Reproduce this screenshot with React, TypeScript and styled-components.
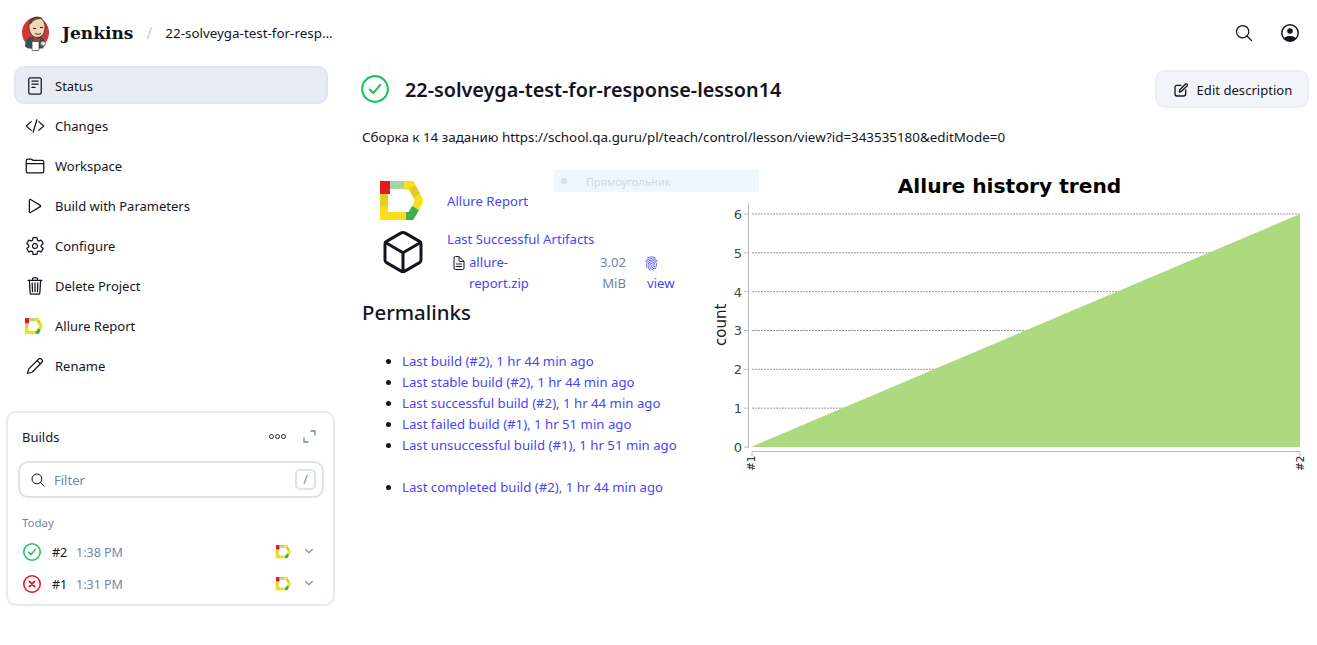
import React from 'react';
import styled, { createGlobalStyle } from 'styled-components';
import {
  IoReaderOutline,
  IoCodeSlashOutline,
  IoFolderOutline,
  IoPlayOutline,
  IoSettingsOutline,
  IoTrashOutline,
  IoSearchOutline,
  IoCubeOutline,
  IoDocumentTextOutline,
  IoFingerPrintOutline,
  IoChevronDown,
} from 'react-icons/io5';

const GlobalStyle = createGlobalStyle`
  html, body {
    margin: 0;
    padding: 0;
    background: #ffffff;
  }
  body {
    font-family: "Noto Sans", "Open Sans", sans-serif;
    font-size: 13px;
    color: #14141f;
  }
`;

const LINK = '#4646f8';
const MUTED = '#7083ad';

const Page = styled.div`
  width: 1317px;
  height: 645px;
  overflow: hidden;
  background: #ffffff;
`;

const TopBar = styled.header`
  height: 66px;
  display: flex;
  align-items: center;
  padding: 0 18px 0 21px;
  box-sizing: border-box;
`;

const Brand = styled.div`
  font-family: "DejaVu Serif", "Liberation Serif", serif;
  font-weight: 700;
  font-size: 17px;
  margin-left: 12px;
  color: #111118;
`;

const Slash = styled.span`
  margin: 0 13px 0 13px;
  color: #c6cfe0;
  font-size: 16px;
`;

const Crumb = styled.span`
  font-size: 13.4px;
  color: #14141f;
`;

const TopActions = styled.div`
  margin-left: auto;
  display: flex;
  align-items: center;
  gap: 27px;
  color: #14141f;
  font-size: 20px;
`;

const Layout = styled.div`
  display: grid;
  grid-template-columns: 336px 1fr;
`;

const Side = styled.aside`
  display: flex;
  flex-direction: column;
  padding-left: 6px;
`;

const Nav = styled.nav`
  display: flex;
  flex-direction: column;
  gap: 2px;
  padding-left: 8px;
  width: 314px;
`;

const NavItem = styled.div<{ $active?: boolean }>`
  height: 38px;
  box-sizing: border-box;
  display: flex;
  align-items: center;
  gap: 10px;
  padding: 2px 0 0 11px;
  border-radius: 10px;
  background: ${p => (p.$active ? '#e9ecf4' : 'transparent')};
  box-shadow: ${p => (p.$active ? 'inset 0 0 0 2px #e2e6f0' : 'none')};
  font-size: 13px;
  svg {
    font-size: 20px;
    flex: none;
  }
`;

const NavLogo = styled.span`
  width: 20px;
  display: inline-flex;
  flex: none;
`;

const BuildsCard = styled.section`
  margin-top: 27px;
  width: 329px;
  height: 195px;
  box-sizing: border-box;
  border: 2px solid #e6e9f4;
  border-radius: 10px;
  padding: 0 9px 0 14px;
`;

const BuildsHead = styled.div`
  height: 48px;
  display: flex;
  align-items: center;
  font-size: 13px;
  padding-bottom: 1px;
  box-sizing: border-box;
`;

const HeadTools = styled.div`
  margin-left: auto;
  display: flex;
  align-items: center;
  gap: 17px;
  padding-right: 8px;
`;

const Dots = styled.div`
  display: flex;
  gap: 1px;
  span {
    width: 3px;
    height: 3px;
    border: 1px solid #2a2a38;
    border-radius: 50%;
  }
`;

const FilterBox = styled.div`
  height: 37px;
  margin-left: -4px;
  box-sizing: border-box;
  border: 2px solid #dde1ee;
  border-radius: 10px;
  display: flex;
  align-items: center;
  padding: 0 6px 0 10px;
  gap: 8px;
  color: ${MUTED};
  font-size: 13px;
  svg {
    color: #14141f;
    font-size: 16px;
  }
`;

const SlashKey = styled.span`
  margin-left: auto;
  width: 21px;
  height: 21px;
  box-sizing: border-box;
  border: 2px solid #dde1ee;
  border-radius: 5px;
  display: flex;
  align-items: center;
  justify-content: center;
  font-size: 12px;
`;

const DayLabel = styled.div`
  margin-top: 17px;
  margin-bottom: 6px;
  font-size: 11.5px;
  color: ${MUTED};
`;

const BuildRow = styled.div`
  height: 32px;
  display: flex;
  align-items: center;
  padding-left: 1px;
  font-size: 12.5px;
`;

const BuildNo = styled.span`
  margin-left: 11px;
  width: 24px;
  color: #14141f;
`;

const BuildTime = styled.span`
  color: ${MUTED};
`;

const RowTools = styled.div`
  margin-left: auto;
  display: flex;
  align-items: center;
  gap: 12px;
  padding-right: 9px;
  svg:last-child {
    color: ${MUTED};
    font-size: 12px;
    margin-bottom: 3px;
  }
`;

const Main = styled.main`
  padding: 4px 8px 0 26px;
  display: flex;
  flex-direction: column;
`;

const TitleRow = styled.div`
  height: 38px;
  display: flex;
  align-items: center;
  & > svg:first-child {
    margin-left: -1px;
  }
`;

const Title = styled.h1`
  margin: 0 0 0 16px;
  font-size: 19.8px;
  font-weight: 600;
  color: #14141f;
`;

const EditButton = styled.button`
  margin-left: auto;
  height: 38px;
  width: 154px;
  padding: 1px 0 0 1px;
  border: 2px solid #eceef5;
  border-radius: 10px;
  background: #f2f4f9;
  display: flex;
  align-items: center;
  justify-content: center;
  gap: 8px;
  font-family: inherit;
  font-size: 13.1px;
  color: #14141f;
`;

const Description = styled.div`
  margin-top: 20px;
  height: 19px;
  line-height: 19px;
  font-size: 13.39px;
  color: #14141f;
`;

const Columns = styled.div`
  position: relative;
  margin-top: 23px;
  display: grid;
  grid-template-columns: 345px 602px;
`;

const Ghost = styled.div`
  position: absolute;
  left: 192px;
  top: 0;
  width: 205px;
  height: 22px;
  background: #eef6fe;
  display: flex;
  align-items: center;
  padding-left: 7px;
  box-sizing: border-box;
  font-size: 11px;
  color: #d3d8de;
  &::before {
    content: '';
    width: 6px;
    height: 6px;
    border-radius: 50%;
    background: #d8dee6;
    margin-right: 19px;
  }
`;

const Tasks = styled.div`
  display: flex;
  flex-direction: column;
`;

const Task = styled.div`
  display: grid;
  grid-template-columns: 85px 1fr;
  align-items: start;
`;

const TaskIcon = styled.div<{ $top: number }>`
  padding: ${p => p.$top}px 0 0 18px;
`;

const CubeSlot = styled.div`
  padding: 4px 0 0 17px;
`;

const TaskLink = styled.a<{ $top: number }>`
  display: block;
  margin-top: ${p => p.$top}px;
  color: ${LINK};
  font-size: 13.15px;
  line-height: 21px;
`;

const Artifact = styled.div`
  display: grid;
  grid-template-columns: 16px 100px 57px 1fr;
  line-height: 21px;
  font-size: 13.15px;
  margin: 2px 0 0 6px;
  color: ${LINK};
  & > svg {
    color: #14141f;
    font-size: 16px;
    margin: 3px 0 0 -2px;
  }
`;

const FileSize = styled.div`
  color: ${MUTED};
  text-align: right;
`;

const ViewLink = styled.div`
  padding-left: 18px;
  svg {
    display: block;
    color: ${LINK};
    font-size: 15px;
    margin: 4px 0 2px;
  }
  span {
    margin-left: 3px;
  }
`;

const SubHeading = styled.h2`
  margin: 4px 0 0;
  font-size: 20.4px;
  line-height: 28px;
  font-weight: 500;
  color: #14141f;
`;

const LinkList = styled.ul<{ $gap: number }>`
  margin: ${p => p.$gap}px 0 0;
  padding: 0 0 0 40px;
  list-style: disc;
  line-height: 21px;
  font-size: 13.2px;
  color: #14141f;
  a {
    color: ${LINK};
  }
`;

const Allure: React.FC<{ w: number }> = ({ w }) => (
  <svg width={w} height={(w * 39) / 44} viewBox="0 0 44 39" fill="none" strokeWidth={8}>
    <path d="M4 35V25M4 13V10M26 35H0" stroke="#f8df1c" />
    <path d="M4 25V13" stroke="#e4cf22" />
    <path d="M10 4H24" stroke="#a9d4a2" />
    <path d="M24 4h7l1.500 3M37 15L39 20 35.500 27" stroke="#f8df1c" />
    <path d="M32 6L37 15" stroke="#e2cc22" />
    <path d="M35.500 27L31 35H26" stroke="#45ad4c" />
    <rect width={10} height={13} fill="#e31b1f" />
  </svg>
);

const JenkinsLogo = () => (
  <svg width="29" height="37" viewBox="0 0 29 36">
    <ellipse cx="14.500" cy="17" rx="13.500" ry="15" fill="#d33833" />
    <path d="M8 13c-1-7 3-11 8-11 5 0 8 4 8 9 0 6-2 10-7 11-5 0-8-3-9-9z" fill="#f0d6b7" stroke="#49372a" strokeWidth="1" />
    <path d="M8 9c0-5 4-8 8-8 3 0 5 1 6 3-4-1-8 0-10 2-1 1-2 3-4 3z" fill="#49372a" opacity="0.85" />
    <path d="M12 13h3M19 12h3" stroke="#231f20" strokeWidth="1.200" />
    <path d="M14 18c2 1 4 1 6 0" stroke="#49372a" strokeWidth="1" fill="none" />
    <path d="M4 31c0-6 3-9 7-10l4 3 4-3c3 1 5 3 5 7l-2 5H7z" fill="#335061" />
    <path d="M13 23l3 2 3-3-1 5-2-2-3 2z" fill="#d33833" />
    <rect x="11" y="26" width="7" height="9" rx="0.500" fill="#ffffff" stroke="#49372a" strokeWidth="0.700" />
    <circle cx="22" cy="28" r="2.500" fill="#f0d6b7" stroke="#49372a" strokeWidth="0.600" />
  </svg>
);

const UserIcon = () => (
  <svg width="18" height="18" viewBox="0 0 18 18">
    <defs>
      <clipPath id="userClip">
        <circle cx="9" cy="9" r="8.200" />
      </clipPath>
    </defs>
    <circle cx="9" cy="9" r="8.200" fill="none" stroke="#14141f" strokeWidth="1.500" />
    <circle cx="9" cy="7" r="2.800" fill="#14141f" />
    <ellipse cx="9" cy="16.500" rx="7" ry="4.500" fill="#14141f" clipPath="url(#userClip)" />
  </svg>
);

const ExpandIcon = () => (
  <svg width="13" height="13" viewBox="0 0 13 13" fill="none" stroke={MUTED} strokeWidth="1.300">
    <path d="M7.500 1H12V5.500M1 7.500V12H5.500" />
  </svg>
);

const PenIcon = () => (
  <svg width="20" height="20" viewBox="0 0 24 24" fill="none" stroke="#14141f" strokeWidth="1.500" strokeLinejoin="round">
    <path d="M3 21l1.500-5.500L16.500 3.600a2 2 0 0 1 2.800 0l1.100 1.100a2 2 0 0 1 0 2.800L8.500 19.500 3 21z" />
    <path d="M14.500 5.500l4 4" />
  </svg>
);

const EditIcon = () => (
  <svg width="16" height="16" viewBox="0 0 24 24" fill="none" stroke="#14141f" strokeWidth="2" strokeLinecap="round" strokeLinejoin="round">
    <path d="M12 5H6a3 3 0 0 0-3 3v10a3 3 0 0 0 3 3h10a3 3 0 0 0 3-3v-6" />
    <path d="M9.500 15l.8-3.500L18.800 3a1.800 1.800 0 0 1 2.500 2.500L12.800 14z" />
  </svg>
);

const StatusIcon: React.FC<{ ok: boolean; size: number }> = ({ ok, size }) => {
  const color = ok ? '#1ec15f' : '#e6141e';
  const weight = size < 20 ? 2 : 1.800;
  return (
    <svg width={size} height={size} viewBox="0 0 24 24" fill="none" strokeLinecap="round" strokeLinejoin="round">
      <circle cx="12" cy="12" r="11" stroke={color} strokeWidth={weight} />
      {ok ? (
        <path d="M7.500 12.500l3 3 6-7" stroke={color} strokeWidth={weight} />
      ) : (
        <path d="M8.500 8.500l7 7M15.500 8.500l-7 7" stroke={color} strokeWidth={2.400} />
      )}
    </svg>
  );
};

const Chart = () => {
  const ticks = [6, 5, 4, 3, 2, 1, 0];
  const top = 44;
  const step = 38.83;
  return (
    <svg width="602" height="302" viewBox="0 0 602 302" fontFamily="DejaVu Sans, sans-serif">
      <text x="302.500" y="23" fontSize="20.200" fontWeight="700" textAnchor="middle" fill="#000">
        Allure history trend
      </text>
      {ticks.map((t, i) => {
        const y = top + step * i;
        return (
          <g key={t}>
            <text x="35" y={y + 5} fontSize="13" textAnchor="end" fill="#444">
              {t}
            </text>
            <line x1="37" x2="41" y1={y} y2={y} stroke="#bbb" />
            {t > 0 && (
              <line x1="45" x2="593" y1={y} y2={y} stroke="#999" strokeWidth="1" strokeDasharray="2 1" />
            )}
          </g>
        );
      })}
      <line x1="41.500" x2="41.500" y1="33" y2="278" stroke="#bbb" />
      <polygon points="44,277 593,44 593,277" fill="#add97f" />
      <path d="M45 286V281.500H593V286" stroke="#bbb" fill="none" />
      <text transform="translate(48 301) rotate(-90)" fontSize="10.500" fill="#222">
        #1
      </text>
      <text transform="translate(597 301) rotate(-90)" fontSize="10.500" fill="#222">
        #2
      </text>
      <text transform="translate(18.500 176) rotate(-90)" fontSize="15" fill="#222">
        count
      </text>
    </svg>
  );
};

const NAV: Array<{ label: string; icon: React.ReactNode; active?: boolean }> = [
  { label: 'Status', icon: <IoReaderOutline />, active: true },
  { label: 'Changes', icon: <IoCodeSlashOutline /> },
  { label: 'Workspace', icon: <IoFolderOutline /> },
  { label: 'Build with Parameters', icon: <IoPlayOutline /> },
  { label: 'Configure', icon: <IoSettingsOutline /> },
  { label: 'Delete Project', icon: <IoTrashOutline /> },
  {
    label: 'Allure Report',
    icon: (
      <NavLogo>
        <Allure w={18} />
      </NavLogo>
    ),
  },
  { label: 'Rename', icon: <PenIcon /> },
];

const PERMALINKS = [
  'Last build (#2), 1 hr 44 min ago',
  'Last stable build (#2), 1 hr 44 min ago',
  'Last successful build (#2), 1 hr 44 min ago',
  'Last failed build (#1), 1 hr 51 min ago',
  'Last unsuccessful build (#1), 1 hr 51 min ago',
];

export default function App() {
  return (
    <Page>
      <GlobalStyle />
      <TopBar>
        <JenkinsLogo />
        <Brand>Jenkins</Brand>
        <Slash>/</Slash>
        <Crumb>22-solveyga-test-for-resp...</Crumb>
        <TopActions>
          <IoSearchOutline />
          <UserIcon />
        </TopActions>
      </TopBar>
      <Layout>
        <Side>
          <Nav>
            {NAV.map(item => (
              <NavItem key={item.label} $active={item.active}>
                {item.icon}
                {item.label}
              </NavItem>
            ))}
          </Nav>
          <BuildsCard>
            <BuildsHead>
              Builds
              <HeadTools>
                <Dots>
                  <span />
                  <span />
                  <span />
                </Dots>
                <ExpandIcon />
              </HeadTools>
            </BuildsHead>
            <FilterBox>
              <IoSearchOutline />
              Filter
              <SlashKey>/</SlashKey>
            </FilterBox>
            <DayLabel>Today</DayLabel>
            <BuildRow>
              <StatusIcon ok size={18} />
              <BuildNo>#2</BuildNo>
              <BuildTime>1:38 PM</BuildTime>
              <RowTools>
                <Allure w={15} />
                <IoChevronDown />
              </RowTools>
            </BuildRow>
            <BuildRow>
              <StatusIcon ok={false} size={18} />
              <BuildNo>#1</BuildNo>
              <BuildTime>1:31 PM</BuildTime>
              <RowTools>
                <Allure w={15} />
                <IoChevronDown />
              </RowTools>
            </BuildRow>
          </BuildsCard>
        </Side>
        <Main>
          <TitleRow>
            <StatusIcon ok size={28} />
            <Title>22-solveyga-test-for-response-lesson14</Title>
            <EditButton>
              <EditIcon />
              Edit description
            </EditButton>
          </TitleRow>
          <Description>
            Сборка к 14 заданию https://school.qa.guru/pl/teach/control/lesson/view?id=343535180&amp;editMode=0
          </Description>
          <Columns>
            <Ghost>Прямоугольник</Ghost>
            <Tasks>
              <Task>
                <TaskIcon $top={11}>
                  <Allure w={44} />
                </TaskIcon>
                <TaskLink $top={21}>Allure Report</TaskLink>
              </Task>
              <Task>
                <CubeSlot>
                  <IoCubeOutline size={48} />
                </CubeSlot>
                <div>
                  <TaskLink $top={5}>Last Successful Artifacts</TaskLink>
                  <Artifact>
                    <IoDocumentTextOutline />
                    <div>
                      allure-
                      <br />
                      report.zip
                    </div>
                    <FileSize>
                      3.02
                      <br />
                      MiB
                    </FileSize>
                    <ViewLink>
                      <IoFingerPrintOutline />
                      <span>view</span>
                    </ViewLink>
                  </Artifact>
                </div>
              </Task>
              <SubHeading>Permalinks</SubHeading>
              <LinkList $gap={25}>
                {PERMALINKS.map(text => (
                  <li key={text}>
                    <a>{text}</a>
                  </li>
                ))}
              </LinkList>
              <LinkList $gap={21}>
                <li>
                  <a>Last completed build (#2), 1 hr 44 min ago</a>
                </li>
              </LinkList>
            </Tasks>
            <Chart />
          </Columns>
        </Main>
      </Layout>
    </Page>
  );
}
